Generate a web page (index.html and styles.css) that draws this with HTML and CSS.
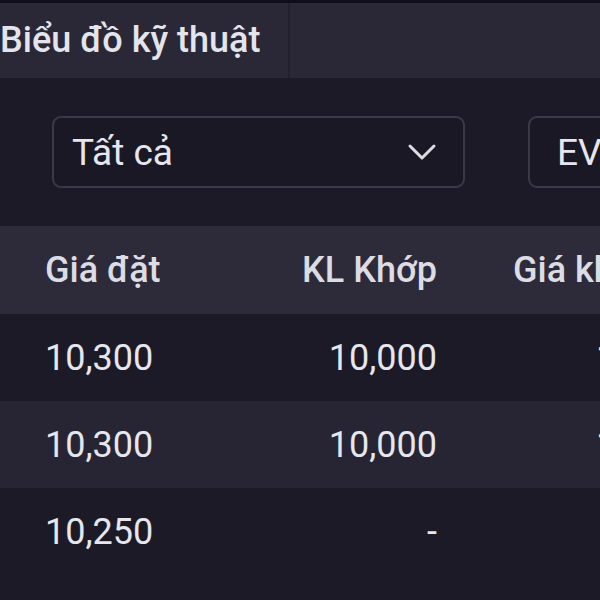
FILE: index.html
```html
<!DOCTYPE html>
<html lang="vi">
<head>
  <meta charset="UTF-8">
  <title>Sổ lệnh</title>
  <link rel="stylesheet" href="styles.css">
</head>
<body>
  <div class="page">
    <div class="tabs">
      <div class="tab">Biểu đồ kỹ thuật</div>
    </div>

    <div class="filters">
      <div class="select select-wide">
        <span>Tất cả</span>
        <svg class="chevron" width="30" height="18" viewBox="0 0 30 18">
          <path d="M3 3 L15 15 L27 3" fill="none" stroke="#dcdce4" stroke-width="3" stroke-linecap="round" stroke-linejoin="round"/>
        </svg>
      </div>
      <div class="select select-code">
        <span>EVF</span>
      </div>
    </div>

    <div class="table">
      <div class="row head">
        <div class="cell c1">Giá đặt</div>
        <div class="cell c2">KL Khớp</div>
        <div class="cell c3">Giá khớp</div>
      </div>
      <div class="row">
        <div class="cell c1">10,300</div>
        <div class="cell c2">10,000</div>
        <div class="cell c3 num">10,300</div>
      </div>
      <div class="row alt">
        <div class="cell c1">10,300</div>
        <div class="cell c2">10,000</div>
        <div class="cell c3 num">10,300</div>
      </div>
      <div class="row">
        <div class="cell c1">10,250</div>
        <div class="cell c2">-</div>
        <div class="cell c3 num"></div>
      </div>
    </div>
  </div>
</body>
</html>
```

FILE: styles.css
```css
body {
  margin: 0;
  background: #1c1a27;
  font-family: Roboto, 'Noto Sans', sans-serif;
  color: #e6e6ee;
  overflow: hidden;
}

.page {
  width: 600px;
  height: 600px;
  overflow: hidden;
}

.tabs {
  height: 75px;
  border-top: 3px solid #0f0d1b;
  background: #2a2836;
  display: flex;
}

.tab {
  width: 288px;
  border-right: 2px solid #22202d;
  font-size: 36px;
  font-weight: 500;
  line-height: 75px;
  white-space: nowrap;
  color: #e4e4ec;
  margin-top: 0;
}

.filters {
  height: 148px;
  display: flex;
  align-items: center;
  gap: 63px;
  padding-left: 52px;
  white-space: nowrap;
}

.select {
  box-sizing: border-box;
  height: 72px;
  width: 200px;
  flex-shrink: 0;
  border: 2px solid #3b3949;
  border-radius: 9px;
  background: #1a1825;
  display: flex;
  align-items: center;
  justify-content: space-between;
  padding: 0 26px 0 18px;
  font-size: 37px;
  color: #e6e6ee;
}

.select-wide {
  width: 413px;
}

.select-code {
  padding-left: 27px;
}

.chevron {
  display: block;
}

.row {
  display: flex;
  height: 87px;
  align-items: center;
  font-size: 36px;
  white-space: nowrap;
}

.row.head {
  height: 88px;
  background: #2d2b39;
  font-weight: 500;
  color: #dcdce4;
}

.row.alt {
  background: #272533;
}

.cell {
  flex-shrink: 0;
}

.c1 {
  width: 200px;
  padding-left: 45px;
}

.c2 {
  width: 192px;
  text-align: right;
}

.c3 {
  width: 200px;
  padding-left: 76px;
}

.c3.num {
  padding-left: 159px;
}
```
